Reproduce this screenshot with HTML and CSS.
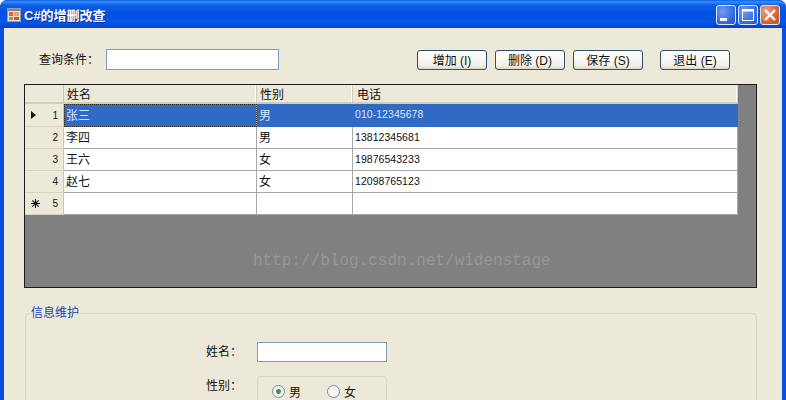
FILE: index.html
```html
<!DOCTYPE html>
<html lang="zh-CN">
<head>
  <meta charset="UTF-8" />
  <title>C#的增删改查</title>
  <link rel="stylesheet" href="styles.css">
</head>
<body>
  <div class="window">
    <div class="titlebar">
      <svg class="app-icon" width="14" height="14" viewBox="0 0 14 14">
        <rect x="0.5" y="0.5" width="13" height="13" fill="#e8dccb" stroke="#9a9aa8"/>
        <rect x="1" y="1" width="12" height="2" fill="#6a86c4"/>
        <rect x="2" y="4" width="4" height="4" fill="#e2622a"/>
        <rect x="7" y="4" width="5" height="4" fill="#d9a878"/>
        <rect x="2" y="9" width="4" height="3" fill="#c9863f"/>
        <rect x="7" y="9" width="5" height="3" fill="#d8542a"/>
      </svg>
      <span class="title">C#的增删改查</span>
      <div class="win-buttons">
        <div class="win-btn">
          <svg width="18" height="18" viewBox="0 0 18 18"><rect x="3" y="12" width="7" height="3" fill="#fff"/></svg>
        </div>
        <div class="win-btn">
          <svg width="18" height="18" viewBox="0 0 18 18"><rect x="3.5" y="3.5" width="11" height="11" fill="none" stroke="#fff"/><rect x="3" y="3" width="12" height="2.5" fill="#fff"/></svg>
        </div>
        <div class="win-btn close">
          <svg width="18" height="18" viewBox="0 0 18 18"><path d="M4 4l10 10M14 4L4 14" stroke="#fff" stroke-width="2.4"/></svg>
        </div>
      </div>
    </div>

    <div class="content">
      <div class="toolbar">
        <label class="query-label">查询条件：</label>
        <input class="text-input query-input" type="text" />
        <div class="actions">
          <button class="btn" type="button">增加 (I)</button>
          <button class="btn" type="button">删除 (D)</button>
          <button class="btn" type="button">保存 (S)</button>
          <button class="btn btn-exit" type="button">退出 (E)</button>
        </div>
      </div>

      <div class="grid">
        <div class="row head">
          <div class="row-head"></div>
          <div class="cell c-name">姓名</div>
          <div class="cell c-sex">性别</div>
          <div class="cell c-tel">电话</div>
        </div>
        <div class="row selected">
          <div class="row-head"><span class="marker arrow"></span><span class="num">1</span></div>
          <div class="cell c-name focus">张三</div>
          <div class="cell c-sex">男</div>
          <div class="cell c-tel phone">010-12345678</div>
        </div>
        <div class="row">
          <div class="row-head"><span class="num">2</span></div>
          <div class="cell c-name">李四</div>
          <div class="cell c-sex">男</div>
          <div class="cell c-tel phone">13812345681</div>
        </div>
        <div class="row">
          <div class="row-head"><span class="num">3</span></div>
          <div class="cell c-name">王六</div>
          <div class="cell c-sex">女</div>
          <div class="cell c-tel phone">19876543233</div>
        </div>
        <div class="row">
          <div class="row-head"><span class="num">4</span></div>
          <div class="cell c-name">赵七</div>
          <div class="cell c-sex">女</div>
          <div class="cell c-tel phone">12098765123</div>
        </div>
        <div class="row">
          <div class="row-head">
            <svg class="marker star" width="9" height="9" viewBox="0 0 9 9"><path d="M4.5 0v9M0 4.5h9M1.3 1.3l6.4 6.4M7.7 1.3L1.3 7.7" stroke="#111" stroke-width="1.1"/></svg>
            <span class="num">5</span>
          </div>
          <div class="cell c-name"></div>
          <div class="cell c-sex"></div>
          <div class="cell c-tel"></div>
        </div>
        <div class="watermark">http://blog.csdn.net/widenstage</div>
      </div>

      <fieldset class="group">
        <legend>信息维护</legend>
        <div class="field field-name">
          <label>姓名：</label>
          <input class="text-input field-input" type="text" />
        </div>
        <div class="field field-sex">
          <label>性别：</label>
          <div class="radio-box">
            <span class="radio on"></span><span class="radio-text">男</span>
            <span class="radio"></span><span class="radio-text">女</span>
          </div>
        </div>
      </fieldset>
    </div>
  </div>
</body>
</html>
```

FILE: styles.css
```css
html, body {
  margin: 0;
  padding: 0;
  height: 400px;
  overflow: hidden;
  background: #fff;
}
body {
  font-family: "Liberation Sans", "Noto Sans CJK SC", sans-serif;
  font-size: 12px;
  color: #111;
}
.window {
  width: 786px;
  height: 400px;
  box-sizing: border-box;
  border-radius: 7px 7px 0 0;
  overflow: hidden;
  background: #0a4fe0;
  display: flex;
  flex-direction: column;
}
.titlebar {
  height: 28px;
  flex: none;
  display: flex;
  align-items: center;
  padding: 2px 6px 0 7px;
  box-sizing: border-box;
  background: linear-gradient(#0a62ea 0, #3a8cf5 2px, #0a5fe8 5px, #0450e0 14px, #0458ea 22px, #0242c8 28px);
}
.app-icon {
  flex: none;
}
.title {
  margin: 0 0 2px 3px;
  color: #fff;
  font-size: 13px;
  font-weight: bold;
  text-shadow: 1px 1px 0 #0a2f98;
}
.win-buttons {
  margin-left: auto;
  display: flex;
  gap: 2px;
}
.win-btn {
  width: 20px;
  height: 20px;
  box-sizing: border-box;
  border: 1px solid #dfe8fb;
  border-radius: 3px;
  background: radial-gradient(circle at 30% 30%, #6f9cf0, #2a5fd8 80%);
  display: flex;
  align-items: center;
  justify-content: center;
}
.win-btn svg {
  flex: none;
}
.win-btn.close {
  background: radial-gradient(circle at 30% 30%, #eca27e, #d4552c 75%);
}
.content {
  flex: 1;
  margin: 0 4px;
  background: #ece9d8;
  min-height: 0;
}
.toolbar {
  display: flex;
  align-items: center;
  height: 24px;
  margin-top: 19px;
  padding-left: 35px;
}
.query-label {
  width: 67px;
  margin-bottom: 2px;
}
.text-input {
  box-sizing: border-box;
  background: #fff;
  border: 1px solid #7f9db9;
  padding: 0;
  margin: 0;
  display: block;
}
.query-input {
  width: 173px;
  height: 21px;
}
.actions {
  display: flex;
  gap: 8px;
  margin: 1px 0 0 138px;
}
.btn {
  width: 70px;
  height: 20px;
  box-sizing: border-box;
  padding: 0 0 2px;
  font: inherit;
  color: #111;
  border: 1px solid #33506e;
  border-radius: 3px;
  background: linear-gradient(#fff, #f2f1ea 80%, #dcd8c8);
}
.btn-exit {
  margin-left: 9px;
}
.grid {
  position: relative;
  width: 733px;
  height: 204px;
  box-sizing: border-box;
  margin: 13px 0 0 20px;
  border: 1px solid #1c1c1c;
  background: #808080;
}
.row {
  display: flex;
  height: 22px;
  width: 713px;
  background: #fff;
}
.row.head {
  height: 19px;
  background: #ece9d8;
  box-shadow: inset 0 -2px 0 #d0cdbd;
}
.row.selected {
  height: 23px;
}
.row-head {
  width: 39px;
  flex: none;
  box-sizing: border-box;
  display: flex;
  align-items: center;
  padding: 0 5px 0 4px;
  background: #ece9d8;
  border-bottom: 1px solid #d6d3c2;
  border-right: 1px solid #c8c5b4;
  font-size: 10px;
}
.head .row-head {
  border-bottom: 2px solid #d0cdbd;
}
.num {
  margin-left: auto;
}
.marker.arrow {
  width: 0;
  height: 0;
  border-left: 5px solid #111;
  border-top: 4px solid transparent;
  border-bottom: 4px solid transparent;
  margin-left: 2px;
}
.marker.star {
  margin-left: 2px;
  flex: none;
}
.cell {
  box-sizing: border-box;
  padding: 0 0 2px 2px;
  display: flex;
  align-items: center;
  border-right: 1px solid #a8a8a8;
  border-bottom: 1px solid #a8a8a8;
}
.head .cell {
  padding: 0 0 0 3px;
  border-right: 1px solid #d0cdbd;
  border-bottom: 2px solid #d0cdbd;
  box-shadow: inset -1px 0 0 #fff;
}
.c-name {
  width: 193px;
}
.c-sex {
  width: 96px;
}
.c-tel {
  flex: 1;
}
.head .c-tel {
  padding-left: 4px;
}
.phone {
  font-size: 10.5px;
  letter-spacing: 0.05px;
}
.selected .cell {
  background: #316ac5;
  color: #d6e6ff;
  border-color: #316ac5;
}
.selected .focus {
  outline: 1px dotted #3a3020;
  outline-offset: -1px;
  border-right-color: #a8a8a8;
}
.watermark {
  position: absolute;
  left: 228px;
  top: 167px;
  font-family: "Liberation Mono", monospace;
  font-size: 16px;
  color: #979797;
}
.group {
  margin: 15px 0 0 21px;
  width: 732px;
  height: 110px;
  box-sizing: border-box;
  padding: 0;
  border: 1px solid #d8d4c2;
  border-radius: 4px;
}
.group legend {
  margin-left: 4px;
  padding: 0 1px 4px;
  color: #2244b8;
}
.field {
  display: flex;
  height: 22px;
  align-items: center;
}
.field label {
  width: 216px;
  padding-right: 15px;
  text-align: right;
}
.field-name {
  margin-top: 17px;
}
.field-name label {
  margin-bottom: 4px;
}
.field-sex {
  margin-top: 13px;
  align-items: flex-start;
}
.field-input {
  width: 130px;
  height: 20px;
}
.radio-box {
  width: 130px;
  height: 40px;
  box-sizing: border-box;
  border: 1px solid #d8d4c2;
  border-radius: 4px;
  display: flex;
  align-items: center;
  align-self: flex-start;
  padding: 0 0 10px 14px;
}
.radio {
  width: 13px;
  height: 13px;
  box-sizing: border-box;
  border: 1px solid #6d8aa8;
  border-radius: 50%;
  background: #f8f8f2;
  flex: none;
}
.radio.on {
  background: radial-gradient(circle, #3a9a3a 0 2px, #f8f8f2 3px);
}
.radio-text {
  margin: 0 26px 0 4px;
}
```
